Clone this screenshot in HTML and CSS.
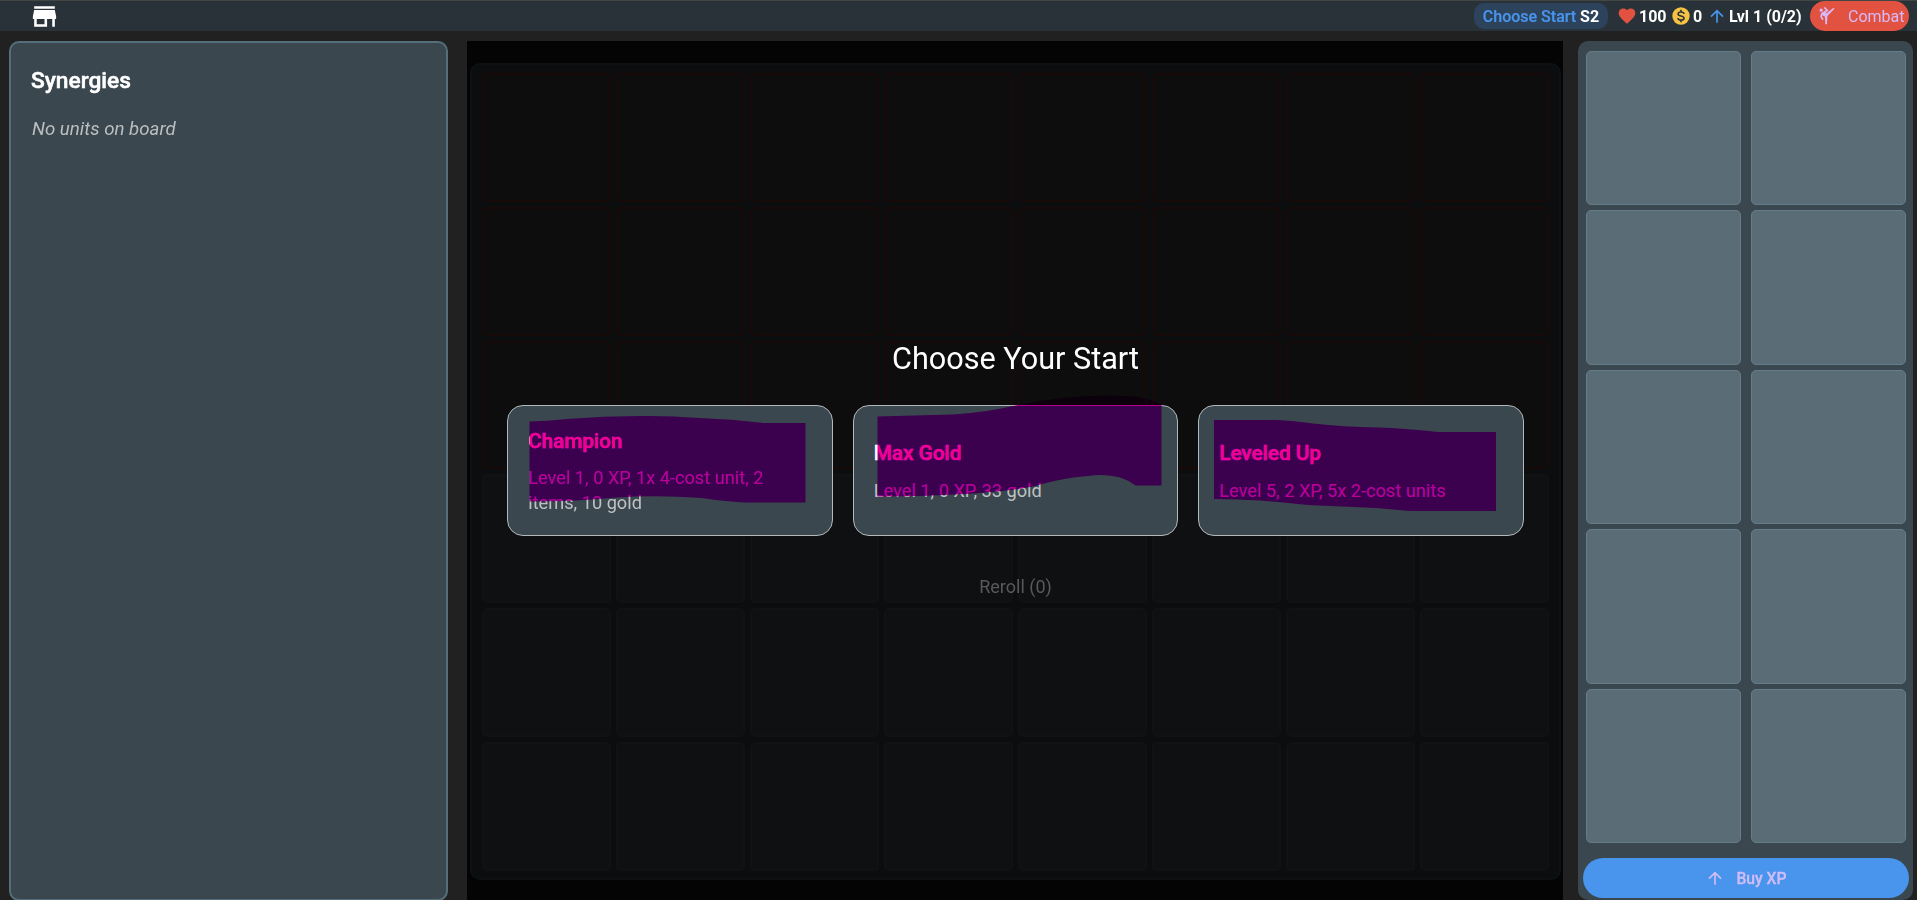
FILE: index.html
```html
<!DOCTYPE html>
<html lang="en">
<head>
<meta charset="utf-8">
<title>Choose Your Start</title>
<link rel="stylesheet" href="styles.css">
</head>
<body>
<header class="topbar">
  <svg class="store" viewBox="0 0 24 24"><path d="M12,18H6V14H12M21,14V12L20,7H4L3,12V14H4V20H14V14H18V20H20V14M20,4H4V6H20V4Z"/></svg>
  <div class="status">
    <div class="phase"><span class="phase-name">Choose Start</span> <b>S2</b></div>
    <div class="stat hp"><svg class="ico heart" viewBox="0 0 24 24"><path d="M12,21.35L10.55,20.03C5.4,15.36 2,12.27 2,8.5C2,5.41 4.42,3 7.5,3C9.24,3 10.91,3.81 12,5.08C13.09,3.81 14.76,3 16.5,3C19.58,3 22,5.41 22,8.5C22,12.27 18.6,15.36 13.45,20.03L12,21.35Z"/></svg><b>100</b></div>
    <div class="stat gold"><svg class="ico coin" viewBox="0 0 24 24"><circle cx="12" cy="12" r="10.400"/><path class="dollar" d="M12 4.500V7.3M12 16.7V19.500M15.600 9.6C15.4 8 13.8 7.2 12 7.2C10.1 7.2 8.5 8.1 8.5 9.6C8.5 11.1 10 11.6 12 12.1C14.1 12.6 15.6 13.1 15.6 14.6C15.6 16.1 13.9 16.9 12 16.9C10.1 16.9 8.4 16 8.3 14.4"/></svg><b>0</b></div>
    <div class="stat level"><svg class="ico up" viewBox="0 0 24 24"><path d="M13,20H11V8L5.5,13.5L4.08,12.08L12,4.16L19.92,12.08L18.5,13.5L13,8V20Z"/></svg><b>Lvl 1 (0/2)</b></div>
    <button class="combat"><svg class="ico" viewBox="0 0 24 24"><path d="M19.8 2L11.6 8.7L10.39 7.66L13.99 5.58L9.41 1L8 2.41L10.74 5.15L5 8.46L3.81 12.75L6.27 17L8 16L5.97 12.5L6.32 11.18L9.5 13L10 22H12L12.5 12L21 3.4L19.8 2M5 3A2 2 0 0 1 7 5A2 2 0 0 1 5 7A2 2 0 0 1 3 5A2 2 0 0 1 5 3Z"/></svg><span>Combat</span></button>
  </div>
</header>
<main class="game">
  <aside class="synergies">
    <h2>Synergies</h2>
    <p>No units on board</p>
  </aside>
  <section class="arena">
    <div class="board">
      <i class="foe"></i><i class="foe"></i><i class="foe"></i><i class="foe"></i><i class="foe"></i><i class="foe"></i><i class="foe"></i><i class="foe"></i>
      <i class="foe"></i><i class="foe"></i><i class="foe"></i><i class="foe"></i><i class="foe"></i><i class="foe"></i><i class="foe"></i><i class="foe"></i>
      <i class="foe"></i><i class="foe"></i><i class="foe"></i><i class="foe"></i><i class="foe"></i><i class="foe"></i><i class="foe"></i><i class="foe"></i>
      <i></i><i></i><i></i><i></i><i></i><i></i><i></i><i></i>
      <i></i><i></i><i></i><i></i><i></i><i></i><i></i><i></i>
      <i></i><i></i><i></i><i></i><i></i><i></i><i></i><i></i>
    </div>
    <div class="dialog">
      <h1>Choose Your Start</h1>
      <div class="cards">
        <article class="card"><h3>Champion</h3><p>Level 1, 0 XP, 1x 4-cost unit, 2 items, 10 gold</p>
          <svg class="tint" viewBox="0 0 325 131"><path d="M22.5 16.5Q40 16 60 14Q97 11 133 11Q160 10.500 192 13Q225 14 258 18H298.500V97.500H238Q215 96 195 93Q150 90 110 92.500Q70 96.500 22.500 96.500Z"/></svg></article>
        <article class="card"><h3>Max Gold</h3><p>Level 1, 0 XP, 33 gold</p>
          <svg class="tint" viewBox="0 0 325 131"><path d="M24.500 11.500Q60 10.500 100 9.500Q130 8 165 0Q210 -9.500 258 -9.500Q295 -9.500 308.500 0V80.500H282.500Q265 67 235 71Q210 72.500 180 81.500Q130 91 24.500 91.500Z"/></svg></article>
        <article class="card"><h3>Leveled Up</h3><p>Level 5, 2 XP, 5x 2-cost units</p>
          <svg class="tint" viewBox="0 0 325 131"><path d="M16 15H78Q95 15.500 115 18.500Q145 22 180 22.500Q205 23 240 27H298V106H212L178 103L110 100Q60 94 16 94Z"/></svg></article>
      </div>
      <button class="reroll" disabled>Reroll (0)</button>
    </div>
  </section>
  <aside class="bench">
    <div class="slots"><i></i><i></i><i></i><i></i><i></i><i></i><i></i><i></i><i></i><i></i></div>
    <button class="buy"><svg class="ico" viewBox="0 0 24 24"><path d="M13,20H11V8L5.5,13.5L4.08,12.08L12,4.16L19.92,12.08L18.5,13.5L13,8V20Z"/></svg><span>Buy XP</span></button>
  </aside>
</main>
</body>
</html>
```
FILE: styles.css
```css
* { box-sizing: border-box; }
body {
  margin: 0;
  height: 900px;
  overflow: hidden;
  background: #212121;
  color: #fff;
  font-family: Roboto, sans-serif;
  font-size: 16px;
}
h1, h2, h3, p { margin: 0; }
button { border: 0; padding: 0; font-family: inherit; background: none; }

.topbar {
  height: 31px;
  display: flex;
  justify-content: space-between;
  align-items: center;
  padding: 0 8px 0 28.500px;
  border-top: 1px solid #414643;
  background: #293238;
}
.store { width: 31px; height: 31px; fill: #fff; }
.status { display: flex; align-items: center; height: 30px; }
.ico { width: 20px; height: 20px; flex: none; }
.phase {
  width: 134px;
  height: 26px;
  margin-right: 9px;
  line-height: 27px;
  text-align: center;
  border-radius: 10px;
  background: #2d435b;
}
.phase-name { color: #4994ec; font-weight: 500; -webkit-text-stroke: 0.200px; }
.stat { display: flex; align-items: center; gap: 2px; white-space: nowrap; }
.hp { width: 54px; }
.gold { width: 36px; }
.level { width: 103px; }
.heart { fill: #e25241; }
.coin { fill: #f6c244; }
.dollar { fill: none; stroke: #293238; stroke-width: 1.9; }
.up { fill: #4994ec; }
.combat {
  width: 99px;
  height: 30px;
  display: flex;
  align-items: center;
  padding-left: 7px;
  gap: 11px;
  border-radius: 15px;
  background: #e25241;
  color: #d9b8f5;
  fill: #d9b8f5;
  font-size: 16px;
}

.game {
  display: grid;
  grid-template-columns: 439px 1096px 334.500px;
  column-gap: 19px;
  padding: 10px 0 0 9px;
  height: 870px;
}
.synergies {
  border: 2px solid #546e7a;
  border-radius: 10px;
  background: #3b474e;
  padding: 23px 20px;
}
.synergies h2 { font-size: 22.700px; line-height: 30px; font-weight: 500; -webkit-text-stroke: 0.500px; }
.synergies p { padding-left: 1px; margin-top: 19px; font-size: 18.700px; line-height: 28px; font-style: italic; color: #bbbfc1; }

.arena { display: grid; height: 859px; background: #040404; padding: 22px 2px 20px 3px; }
.board, .dialog { grid-area: 1 / 1; }
.board {
  display: grid;
  grid-template-columns: repeat(8, 1fr);
  grid-template-rows: repeat(6, 1fr);
  gap: 5px;
  padding: 8px 10px 7px;
  border: 2px solid #0e1113;
  border-radius: 10px;
  background: #0b0d0e;
}
.board i { border: 2px solid #101214; border-radius: 5px; background: #0f1012; }
.board .foe { border-color: #190a0a; background: #0d0d0d; }
.dialog { display: flex; flex-direction: column; align-items: center; padding-top: 273px; }
.dialog h1 { font-size: 30.600px; line-height: 46px; font-weight: 400; }
.cards { display: flex; gap: 20px; margin-top: 23px; }
.card {
  position: relative;
  width: 325.500px;
  height: 131px;
  display: flex;
  flex-direction: column;
  justify-content: center;
  gap: 11.500px;
  padding: 2px 20px 0;
  border: 1px solid #b3b8ba;
  border-radius: 16px;
  background: #3b474e;
}
.card h3 { font-size: 20.700px; line-height: 26px; font-weight: 500; -webkit-text-stroke: 0.500px; }
.card p { font-size: 18.200px; line-height: 25px; color: #bec2c4; }
.card:first-child p { padding-right: 30px; }
.tint {
  position: absolute;
  left: -1px;
  top: -1px;
  width: 325px;
  height: 131px;
  overflow: visible;
  fill: #f0008f;
  mix-blend-mode: darken;
}
.reroll { margin-top: 36px; font-size: 18px; line-height: 30px; color: #58595a; }

.bench {
  height: 859px;
  margin-left: -3.800px;
  margin-right: 3.800px;
  display: flex;
  flex-direction: column;
  border-radius: 10px;
  background: #3b474e;
  padding: 10px 4px 2px 5px;
}
.slots {
  height: 792px;
  display: grid;
  grid-template-columns: 1fr 1fr;
  grid-template-rows: repeat(5, 1fr);
  gap: 5px 10px;
  margin: 0 3px 15px;
}
.slots i { border: 1px solid #647d89; border-radius: 5px; background: #5a6d77; }
.buy {
  height: 40px;
  display: flex;
  align-items: center;
  justify-content: center;
  gap: 11px;
  border-radius: 20px;
  background: #4994ec;
  color: #d0bdf7;
  fill: #d0bdf7;
  font-size: 15.700px;
  font-weight: 500;
  -webkit-text-stroke: 0.300px;
}
```
